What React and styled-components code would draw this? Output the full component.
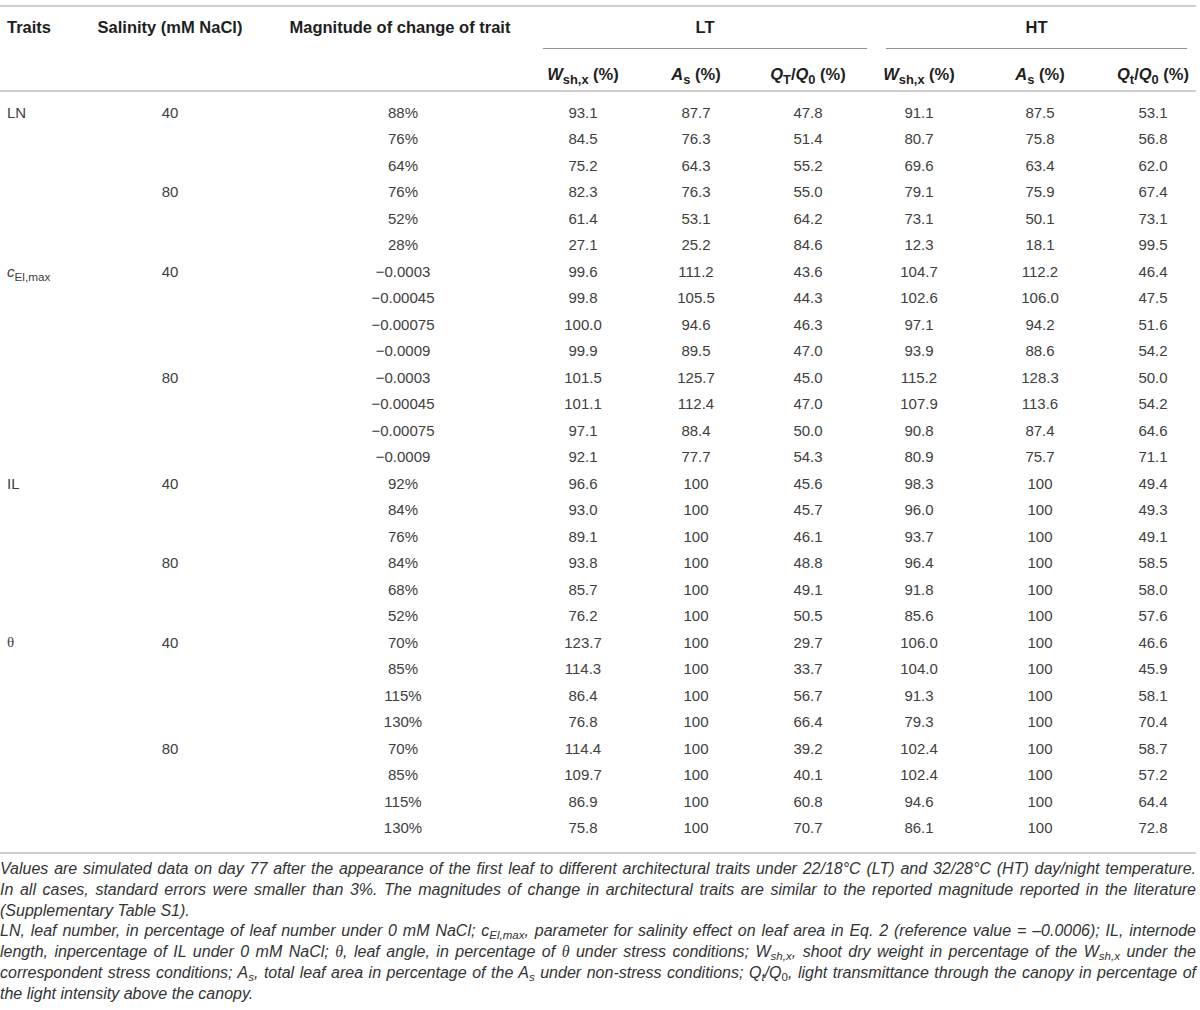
import React from 'react';
import styled, { createGlobalStyle } from 'styled-components';

const COLS = '86px 168px 292px 94px 112px 112px 116px 116px 100px';
// horizontal nudge of the text inside each column, in px
const NUDGE = [0, 0, 3, -10, 0, 0, -3, 2, 7];

const rows = [
  ['LN', '40', '88%', '93.1', '87.7', '47.8', '91.1', '87.5', '53.1'],
  ['', '', '76%', '84.5', '76.3', '51.4', '80.7', '75.8', '56.8'],
  ['', '', '64%', '75.2', '64.3', '55.2', '69.6', '63.4', '62.0'],
  ['', '80', '76%', '82.3', '76.3', '55.0', '79.1', '75.9', '67.4'],
  ['', '', '52%', '61.4', '53.1', '64.2', '73.1', '50.1', '73.1'],
  ['', '', '28%', '27.1', '25.2', '84.6', '12.3', '18.1', '99.5'],
  ['cEl', '40', '\u22120.0003', '99.6', '111.2', '43.6', '104.7', '112.2', '46.4'],
  ['', '', '\u22120.00045', '99.8', '105.5', '44.3', '102.6', '106.0', '47.5'],
  ['', '', '\u22120.00075', '100.0', '94.6', '46.3', '97.1', '94.2', '51.6'],
  ['', '', '\u22120.0009', '99.9', '89.5', '47.0', '93.9', '88.6', '54.2'],
  ['', '80', '\u22120.0003', '101.5', '125.7', '45.0', '115.2', '128.3', '50.0'],
  ['', '', '\u22120.00045', '101.1', '112.4', '47.0', '107.9', '113.6', '54.2'],
  ['', '', '\u22120.00075', '97.1', '88.4', '50.0', '90.8', '87.4', '64.6'],
  ['', '', '\u22120.0009', '92.1', '77.7', '54.3', '80.9', '75.7', '71.1'],
  ['IL', '40', '92%', '96.6', '100', '45.6', '98.3', '100', '49.4'],
  ['', '', '84%', '93.0', '100', '45.7', '96.0', '100', '49.3'],
  ['', '', '76%', '89.1', '100', '46.1', '93.7', '100', '49.1'],
  ['', '80', '84%', '93.8', '100', '48.8', '96.4', '100', '58.5'],
  ['', '', '68%', '85.7', '100', '49.1', '91.8', '100', '58.0'],
  ['', '', '52%', '76.2', '100', '50.5', '85.6', '100', '57.6'],
  ['theta', '40', '70%', '123.7', '100', '29.7', '106.0', '100', '46.6'],
  ['', '', '85%', '114.3', '100', '33.7', '104.0', '100', '45.9'],
  ['', '', '115%', '86.4', '100', '56.7', '91.3', '100', '58.1'],
  ['', '', '130%', '76.8', '100', '66.4', '79.3', '100', '70.4'],
  ['', '80', '70%', '114.4', '100', '39.2', '102.4', '100', '58.7'],
  ['', '', '85%', '109.7', '100', '40.1', '102.4', '100', '57.2'],
  ['', '', '115%', '86.9', '100', '60.8', '94.6', '100', '64.4'],
  ['', '', '130%', '75.8', '100', '70.7', '86.1', '100', '72.8'],
];

function TraitLabel({ name }) {
  if (name === 'cEl') {
    return (
      <span>
        <i>c</i>
        <Sub>El,max</Sub>
      </span>
    );
  }
  if (name === 'theta') return <Greek>θ</Greek>;
  return name;
}

function Sym({ base, sub }) {
  return (
    <>
      <i>{base}</i>
      <Sub>{sub}</Sub>
    </>
  );
}

export default function App() {
  return (
    <>
      <GlobalStyle />
      <Page>
        <Table>
          <HeadRow>
            <HeadCell>Traits</HeadCell>
            <HeadCell $center>Salinity (mM NaCl)</HeadCell>
            <HeadCell $center>Magnitude of change of trait</HeadCell>
            <GroupCell $from={4} $ml={-3} $mr={-3}>LT</GroupCell>
            <GroupCell $from={7} $ml={22} $mr={9}>HT</GroupCell>
          </HeadRow>
          <SubHeadRow>
            <SubCell $col={4} $nudge={NUDGE[3]}><Sym base="W" sub="sh,x" /> (%)</SubCell>
            <SubCell $col={5} $nudge={NUDGE[4]}><Sym base="A" sub="s" /> (%)</SubCell>
            <SubCell $col={6} $nudge={NUDGE[5]}><Sym base="Q" sub="T" />/<Sym base="Q" sub="0" /> (%)</SubCell>
            <SubCell $col={7} $nudge={NUDGE[6]}><Sym base="W" sub="sh,x" /> (%)</SubCell>
            <SubCell $col={8} $nudge={NUDGE[7]}><Sym base="A" sub="s" /> (%)</SubCell>
            <SubCell $col={9} $nudge={NUDGE[8]}><Sym base="Q" sub="t" />/<Sym base="Q" sub="0" /> (%)</SubCell>
          </SubHeadRow>
          <Body>
            {rows.map((r, i) => (
              <Row key={i}>
                <TraitCell><TraitLabel name={r[0]} /></TraitCell>
                {r.slice(1).map((v, j) => (
                  <Cell key={j} $nudge={NUDGE[j + 1]}>{v}</Cell>
                ))}
              </Row>
            ))}
          </Body>
        </Table>
        <Notes>
          <Para>
            <Line>
              Values are simulated data on day 77 after the appearance of the first leaf to different architectural traits under 22/18°C (LT) and 32/28°C (HT) day/night temperature.
            </Line>
            <Line>
              In all cases, standard errors were smaller than 3%. The magnitudes of change in architectural traits are similar to the reported magnitude reported in the literature
            </Line>
            <LastLine>(Supplementary Table S1).</LastLine>
          </Para>
          <Para>
            <Line>
              LN, leaf number, in percentage of leaf number under 0 mM NaCl; c<NoteSub>El,max</NoteSub>, parameter for salinity effect on leaf area in Eq. 2 (reference value = –0.0006); IL, internode
            </Line>
            <Line>
              length, inpercentage of IL under 0 mM NaCl; <Greek>θ</Greek>, leaf angle, in percentage of <Greek>θ</Greek> under stress conditions; W<NoteSub>sh,x</NoteSub>, shoot dry weight in percentage of the W<NoteSub>sh,x</NoteSub> under the
            </Line>
            <Line>
              correspondent stress conditions; A<NoteSub>s</NoteSub>, total leaf area in percentage of the A<NoteSub>s</NoteSub> under non-stress conditions; Q<NoteSub>t</NoteSub>/Q<UprightSub>0</UprightSub>, light transmittance through the canopy in percentage of
            </Line>
            <LastLine>the light intensity above the canopy.</LastLine>
          </Para>
        </Notes>
      </Page>
    </>
  );
}

const nudge = (p) =>
  p.$nudge > 0
    ? `padding-left: ${p.$nudge * 2}px;`
    : p.$nudge < 0
    ? `padding-right: ${-p.$nudge * 2}px;`
    : '';

const GlobalStyle = createGlobalStyle`
  body {
    margin: 0;
    background: #ffffff;
    font-family: "Liberation Sans", Arial, sans-serif;
  }
`;

const Page = styled.div`
  width: 1196px;
  padding-top: 5px;
`;

const Table = styled.div`
  border-top: 2px solid #cdcdcd;
  border-bottom: 2px solid #cdcdcd;
`;

const HeadRow = styled.div`
  display: grid;
  grid-template-columns: ${COLS};
  height: 42px;
  font-size: 16.5px;
  font-weight: bold;
  color: #1e1e1e;
`;

const HeadCell = styled.div`
  padding-top: 10px;
  line-height: 20px;
  white-space: nowrap;
  text-align: ${(p) => (p.$center ? 'center' : 'left')};
  &:first-child {
    padding-left: 7px;
  }
`;

const GroupCell = styled.div`
  grid-column: ${(p) => p.$from} / span 3;
  margin: 0 ${(p) => p.$mr}px 0 ${(p) => p.$ml}px;
  padding-top: 10px;
  line-height: 20px;
  text-align: center;
  border-bottom: 1px solid #939393;
`;

const SubHeadRow = styled.div`
  display: grid;
  grid-template-columns: ${COLS};
  height: 41px;
  font-size: 16.5px;
  font-weight: bold;
  color: #1e1e1e;
  border-bottom: 2px solid #cdcdcd;
`;

const SubCell = styled.div`
  grid-column: ${(p) => p.$col};
  padding-top: 15px;
  ${nudge}
  line-height: 20px;
  text-align: center;
  white-space: nowrap;
`;

const Sub = styled.sub`
  font-style: normal;
  font-size: 0.78em;
  vertical-align: -0.3em;
  line-height: 0;
`;

const Greek = styled.span`
  font-family: "Liberation Serif", "DejaVu Serif", serif;
`;

const Body = styled.div`
  padding: 7px 0 11px;
`;

const Row = styled.div`
  display: grid;
  grid-template-columns: ${COLS};
  height: 26.5px;
  align-items: center;
  font-size: 15px;
  color: #404040;
`;

const Cell = styled.div`
  text-align: center;
  ${nudge}
  white-space: nowrap;
`;

const TraitCell = styled.div`
  padding-left: 7px;
  white-space: nowrap;
`;

const Notes = styled.div`
  padding-top: 5px;
  font-size: 16px;
  font-style: italic;
  color: #333333;
  line-height: 20.8px;
`;

const Para = styled.div``;

const Line = styled.div`
  text-align: justify;
  text-align-last: justify;
  white-space: nowrap;
`;

const LastLine = styled.div`
  text-align: left;
`;

const NoteSub = styled.sub`
  font-size: 0.72em;
  vertical-align: -0.25em;
  line-height: 0;
`;

const UprightSub = styled(NoteSub)`
  font-style: normal;
`;
